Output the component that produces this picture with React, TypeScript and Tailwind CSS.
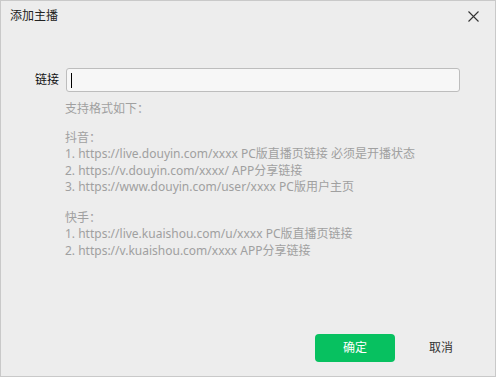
const font = { fontFamily: '"Noto Sans", "Noto Sans CJK SC", sans-serif' }

export default function App() {
  return (
    <div
      className="w-[496px] h-[377px] bg-[#ededed] border border-[#c9c9c9] flex flex-col text-[12px]"
      style={font}
    >
      <div className="h-[30px] flex items-center justify-between pl-[9px] pr-[16px]">
        <span className="text-[#222]">添加主播</span>
        <svg width="11" height="11" viewBox="0 0 11 11" className="text-[#333]">
          <path d="M0.5 0.5 L10.5 10.5 M10.5 0.5 L0.5 10.5" stroke="currentColor" strokeWidth="1.1" />
        </svg>
      </div>

      <div className="mt-[37px] flex items-center">
        <label className="w-[59px] text-right pr-[1px] text-[#111]">链接</label>
        <div className="ml-[6px] w-[394px] h-[24px] bg-[#f7f7f7] border border-[#bdbdbd] rounded-[3px] flex items-center pl-[4px]">
          <span className="w-[1px] h-[15px] bg-black" />
        </div>
      </div>

      <div className="pl-[64px] mt-[9px] text-[#a0a0a0] leading-[16.5px]">
        <div>支持格式如下：</div>
        <div className="mt-[12px]">
          <div>抖音：</div>
          <div>1. https://live.douyin.com/xxxx PC版直播页链接 必须是开播状态</div>
          <div>2. https://v.douyin.com/xxxx/ APP分享链接</div>
          <div>3. https://www.douyin.com/user/xxxx PC版用户主页</div>
        </div>
        <div className="mt-[14px]">
          <div>快手：</div>
          <div>1. https://live.kuaishou.com/u/xxxx PC版直播页链接</div>
          <div>2. https://v.kuaishou.com/xxxx APP分享链接</div>
        </div>
      </div>

      <div className="mt-auto mb-[14px] mr-[14px] flex justify-end gap-[6px]">
        <button className="w-[80px] h-[28px] rounded-[4px] bg-[#07c160] text-white">确定</button>
        <button className="w-[80px] h-[28px] text-[#333]">取消</button>
      </div>
    </div>
  )
}
